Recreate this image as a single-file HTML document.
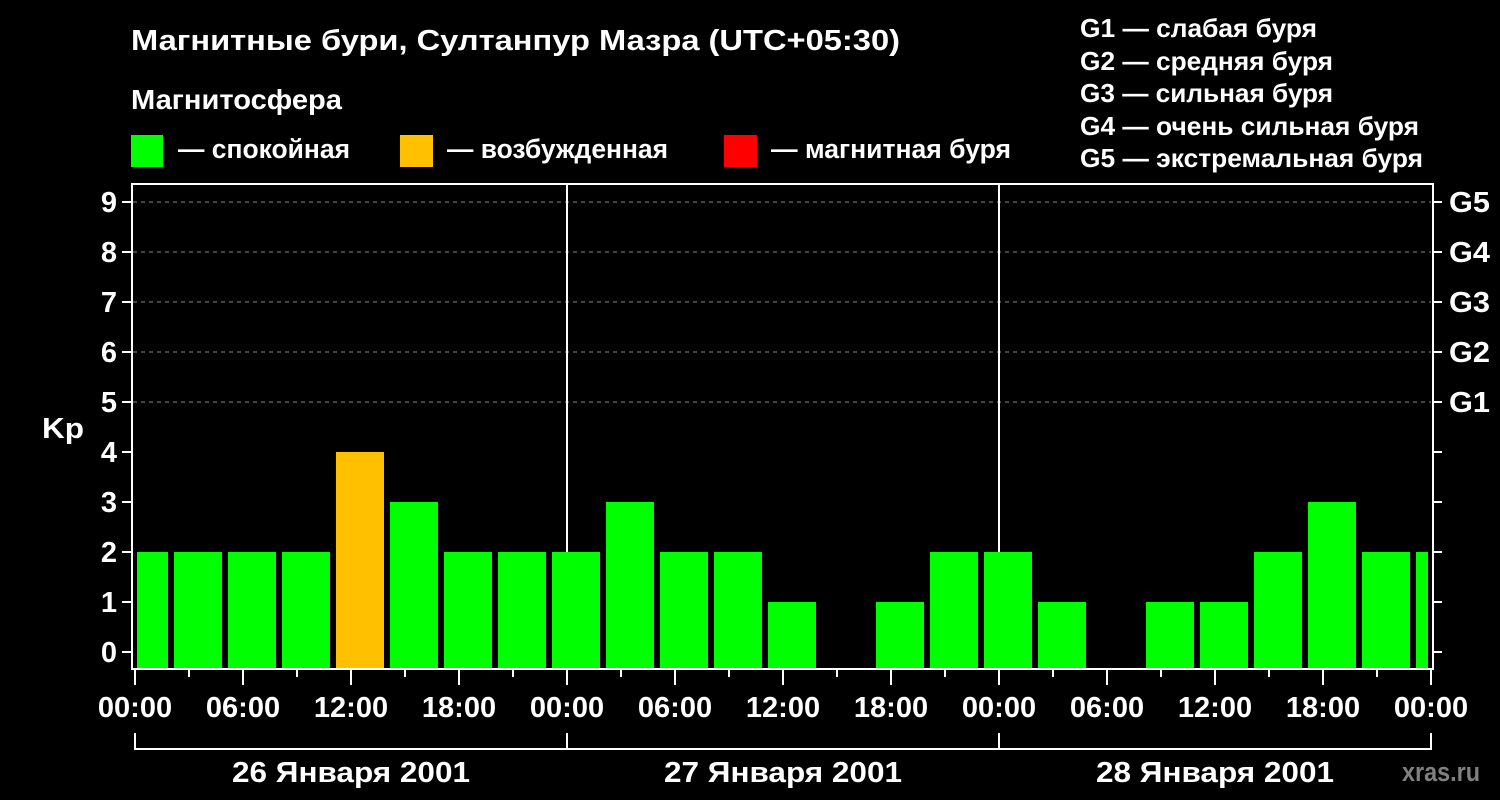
<!DOCTYPE html>
<html><head><meta charset="utf-8"><style>html,body{margin:0;padding:0;background:#000}svg{display:block}text{font-family:"Liberation Sans","DejaVu Sans",sans-serif;font-weight:bold;fill:#fff}</style></head><body>
<svg width="1500" height="800" viewBox="0 0 1500 800" xmlns="http://www.w3.org/2000/svg">
<rect width="1500" height="800" fill="#000"/>
<text x="131" y="50" font-size="29" textLength="769" lengthAdjust="spacingAndGlyphs">Магнитные бури, Султанпур Мазра (UTC+05:30)</text>
<text x="131" y="109" font-size="28" textLength="211" lengthAdjust="spacingAndGlyphs">Магнитосфера</text>
<rect x="131" y="135" width="32" height="32" fill="#00ff00"/>
<text x="178" y="158" font-size="27" textLength="172" lengthAdjust="spacingAndGlyphs">— спокойная</text>
<rect x="400" y="135" width="33" height="32" fill="#ffc000"/>
<text x="447" y="158" font-size="27" textLength="221" lengthAdjust="spacingAndGlyphs">— возбужденная</text>
<rect x="724" y="135" width="33" height="32" fill="#ff0000"/>
<text x="771" y="158" font-size="27" textLength="240" lengthAdjust="spacingAndGlyphs">— магнитная буря</text>
<g font-size="26">
<text x="1080" y="37" textLength="237" lengthAdjust="spacingAndGlyphs">G1 — слабая буря</text>
<text x="1080" y="70" textLength="253" lengthAdjust="spacingAndGlyphs">G2 — средняя буря</text>
<text x="1080" y="102" textLength="253" lengthAdjust="spacingAndGlyphs">G3 — сильная буря</text>
<text x="1080" y="135" textLength="339" lengthAdjust="spacingAndGlyphs">G4 — очень сильная буря</text>
<text x="1080" y="167" textLength="343" lengthAdjust="spacingAndGlyphs">G5 — экстремальная буря</text>
</g>
<g stroke="#888" stroke-width="1" stroke-dasharray="4,4">
<line x1="133" y1="202" x2="1431" y2="202"/><line x1="133" y1="252" x2="1431" y2="252"/><line x1="133" y1="302" x2="1431" y2="302"/><line x1="133" y1="352" x2="1431" y2="352"/><line x1="133" y1="402" x2="1431" y2="402"/>
</g>
<g stroke="#fff" stroke-width="2">
<line x1="567" y1="183" x2="567" y2="668"/><line x1="999" y1="183" x2="999" y2="668"/>
</g>
<g fill="#00ff00">
<rect x="137" y="552" width="31" height="116"/>
<rect x="174" y="552" width="48" height="116"/>
<rect x="228" y="552" width="48" height="116"/>
<rect x="282" y="552" width="48" height="116"/>
<rect x="336" y="452" width="48" height="216" fill="#ffc000"/>
<rect x="390" y="502" width="48" height="166"/>
<rect x="444" y="552" width="48" height="116"/>
<rect x="498" y="552" width="48" height="116"/>
<rect x="552" y="552" width="48" height="116"/>
<rect x="606" y="502" width="48" height="166"/>
<rect x="660" y="552" width="48" height="116"/>
<rect x="714" y="552" width="48" height="116"/>
<rect x="768" y="602" width="48" height="66"/>
<rect x="876" y="602" width="48" height="66"/>
<rect x="930" y="552" width="48" height="116"/>
<rect x="984" y="552" width="48" height="116"/>
<rect x="1038" y="602" width="48" height="66"/>
<rect x="1146" y="602" width="48" height="66"/>
<rect x="1200" y="602" width="48" height="66"/>
<rect x="1254" y="552" width="48" height="116"/>
<rect x="1308" y="502" width="48" height="166"/>
<rect x="1362" y="552" width="48" height="116"/>
<rect x="1416" y="552" width="12" height="116"/>
</g>
<rect x="132" y="184" width="1301" height="485" fill="none" stroke="#fff" stroke-width="2"/>
<g stroke="#fff" stroke-width="2">
<line x1="122" y1="202" x2="132" y2="202"/><line x1="122" y1="252" x2="132" y2="252"/><line x1="122" y1="302" x2="132" y2="302"/><line x1="122" y1="352" x2="132" y2="352"/><line x1="122" y1="402" x2="132" y2="402"/><line x1="122" y1="452" x2="132" y2="452"/><line x1="122" y1="502" x2="132" y2="502"/><line x1="122" y1="552" x2="132" y2="552"/><line x1="122" y1="602" x2="132" y2="602"/><line x1="122" y1="652" x2="132" y2="652"/>
<line x1="1433" y1="202" x2="1442" y2="202"/><line x1="1433" y1="252" x2="1442" y2="252"/><line x1="1433" y1="302" x2="1442" y2="302"/><line x1="1433" y1="352" x2="1442" y2="352"/><line x1="1433" y1="402" x2="1442" y2="402"/><line x1="1433" y1="452" x2="1442" y2="452"/><line x1="1433" y1="502" x2="1442" y2="502"/><line x1="1433" y1="552" x2="1442" y2="552"/><line x1="1433" y1="602" x2="1442" y2="602"/><line x1="1433" y1="652" x2="1442" y2="652"/>
<path d="M135 669V685M243 669V685M351 669V685M459 669V685M567 669V685M675 669V685M783 669V685M891 669V685M999 669V685M1107 669V685M1215 669V685M1323 669V685M1431 669V685"/>
<path d="M189 669V677M297 669V677M405 669V677M513 669V677M621 669V677M729 669V677M837 669V677M945 669V677M1053 669V677M1161 669V677M1269 669V677M1377 669V677"/>
<path d="M135 733V749H1431V733M567 733V749M999 733V749" fill="none"/>
</g>
<g font-size="29" text-anchor="end">
<text x="117" y="212">9</text><text x="117" y="262">8</text><text x="117" y="312">7</text><text x="117" y="362">6</text><text x="117" y="412">5</text><text x="117" y="462">4</text><text x="117" y="512">3</text><text x="117" y="562">2</text><text x="117" y="612">1</text><text x="117" y="662">0</text>
</g>
<text x="42" y="438" font-size="29" textLength="42" lengthAdjust="spacingAndGlyphs">Kp</text>
<g font-size="29">
<text x="1449" y="212" textLength="41" lengthAdjust="spacingAndGlyphs">G5</text><text x="1449" y="262" textLength="41" lengthAdjust="spacingAndGlyphs">G4</text><text x="1449" y="312" textLength="41" lengthAdjust="spacingAndGlyphs">G3</text><text x="1449" y="362" textLength="41" lengthAdjust="spacingAndGlyphs">G2</text><text x="1449" y="412" textLength="41" lengthAdjust="spacingAndGlyphs">G1</text>
</g>
<g font-size="29" text-anchor="middle">
<text x="135" y="717">00:00</text><text x="243" y="717">06:00</text><text x="351" y="717">12:00</text><text x="459" y="717">18:00</text><text x="567" y="717">00:00</text><text x="675" y="717">06:00</text><text x="783" y="717">12:00</text><text x="891" y="717">18:00</text><text x="999" y="717">00:00</text><text x="1107" y="717">06:00</text><text x="1215" y="717">12:00</text><text x="1323" y="717">18:00</text><text x="1431" y="717">00:00</text>
<text x="351" y="782" textLength="238" lengthAdjust="spacingAndGlyphs">26 Января 2001</text><text x="783" y="782" textLength="238" lengthAdjust="spacingAndGlyphs">27 Января 2001</text><text x="1215" y="782" textLength="238" lengthAdjust="spacingAndGlyphs">28 Января 2001</text>
</g>
<text x="1402" y="781" font-size="27" textLength="78" lengthAdjust="spacingAndGlyphs" style="fill:#808080">xras.ru</text>
</svg>
</body></html>
